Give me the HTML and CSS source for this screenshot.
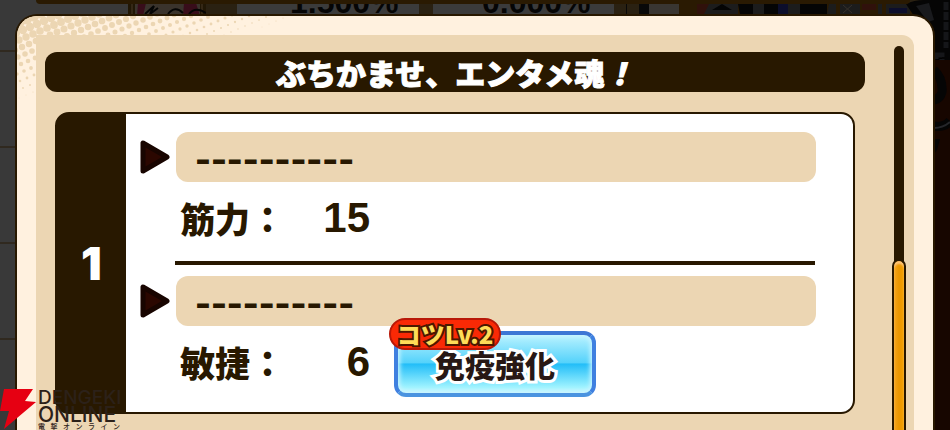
FILE: index.html
```html
<!DOCTYPE html>
<html lang="ja">
<head>
<meta charset="utf-8">
<title>ぶちかませ、エンタメ魂！</title>
<link rel="stylesheet" href="styles.css">
</head>
<body>
<div class="backdrop">
  <svg class="backdrop-art" width="950" height="430" aria-hidden="true">
    <rect width="950" height="430" fill="#393939"/>
    <path d="M0 51H20M0 147H20M0 243H20M0 339H20" stroke="#30291f" stroke-width="2"/>
    <rect x="128" y="0" width="78" height="16" fill="#211705"/>
    <path d="M132 3V16M202 3V16" stroke="#4b3a28" stroke-width="1"/>
    <path d="M135 3H200V16H135Z" fill="#3a332c"/>
    <path d="M138 3H146L143 16H137ZM184 3H196L200 16H183Z" fill="#380d1a"/>
    <path d="M145 14L154 6L150 14L158 8M168 14Q175 5 183 13M189 14Q195 6 206 13" fill="none" stroke="#050505" stroke-width="2"/>
    <path d="M206 0H950V16H206Z" fill="#2a2112"/>
    <path d="M237 3H419V16H237ZM433 3H614V16H433Z" fill="#3b3b3b"/>
    <path d="M626 3H627V14H626ZM639 3H649V14H639Z" fill="#090909"/>
    <path d="M649 3H679V16H649Z" fill="#393632"/>
    <path d="M679 3H950V430H679Z" fill="#2a1a02"/>
    <path d="M697 4H709V14H697ZM862 4H876V10H862Z" fill="#30110b"/>
    <path d="M709 4H738V14H704ZM753 4H764V14H753ZM788 4H802V14H788ZM829 4H836V14H827ZM840 4H860V14H840ZM878 4H882V14H878ZM886 4H910V14H886Z" fill="#1c1c1c"/>
    <path d="M738 4H753V14H740ZM764 4H778V14H764ZM800 4H827V14H800ZM712 10L722 4L732 10Z" fill="#050505"/>
    <path d="M778 4H788V14H778ZM889 8H907V13H889Z" fill="#0c0e2c"/>
    <path d="M843 5L852 13M852 5L843 13" stroke="#35302a"/>
    <path d="M906 4Q914 0 924 0H950V430H930V40Z" fill="#050505"/>
    <path d="M916 6L929 3L934 20L928 22Z" fill="#191a1d"/>
    <path d="M946 2V48M936 55H942V66H936Z" stroke="#151619" stroke-width="5" stroke-dasharray="8 2"/>
    <path d="M934 60H950V430H934Z" fill="#170600"/>
    <path d="M934 70Q943 78 942 92Q940 99 934 100M934 126Q944 128 950 121" fill="none" stroke="#050505" stroke-width="9"/>
    <path d="M934 128Q943 128 950 122" fill="none" stroke="#25262a" stroke-width="2"/>
    <path d="M934 139H940L937 150L934 154Z" fill="#050505"/>
  </svg>
  <span class="rate rate-first">1.500%</span>
  <span class="rate rate-second">0.000%</span>
  <div class="backdrop-edge"></div>
</div>

<main class="dialog">
  <svg class="halftone" id="halftone" aria-hidden="true"></svg>
  <div class="panel">
    <div class="list">
      <h1 class="title">ぶちかませ、エンタメ魂<em>！</em></h1>
      <section class="card">
        <div class="card-number">1</div>
        <div class="card-body">
          <div class="choice">
            <svg class="arrow" viewBox="0 0 30 34" aria-hidden="true"><path d="M3 3V31L27 17Z" fill="#2b0700" stroke="#180500" stroke-width="5" stroke-linejoin="round"/></svg>
            <div class="field">----------</div>
            <div class="stat"><span class="stat-name">筋力：</span><span class="stat-value">15</span></div>
          </div>
          <hr class="divider">
          <div class="choice">
            <svg class="arrow" viewBox="0 0 30 34" aria-hidden="true"><path d="M3 3V31L27 17Z" fill="#2b0700" stroke="#180500" stroke-width="5" stroke-linejoin="round"/></svg>
            <div class="field">----------</div>
            <div class="stat"><span class="stat-name">敏捷：</span><span class="stat-value">6</span>
              <button class="skill" type="button"><span class="skill-level">コツLv.2</span><span class="skill-name">免疫強化</span></button>
            </div>
          </div>
        </div>
      </section>
    </div>
    <div class="scrollbar"><div class="thumb"></div></div>
  </div>
</main>

<div class="watermark">
  <svg class="bolt" viewBox="0 0 36 40" aria-hidden="true"><path d="M4 0H33L25 12L36 13L4 40L9 22H0Z" fill="#e60012"/></svg>
  <div class="brand">
    <span class="brand-line">DENGEKI</span>
    <span class="brand-line brand-wide">ONLINE</span>
    <span class="brand-kana">電撃オンライン</span>
  </div>
</div>
<script src="halftone.js"></script>
</body>
</html>
```
FILE: styles.css
```css
* { box-sizing: border-box; }

body {
  margin: 0;
  height: 100vh;
  overflow: hidden;
  position: relative;
  display: flex;
  background: #393939;
  color: #281800;
  font-family: "Noto Sans CJK JP", "Noto Sans", sans-serif;
  font-weight: 900;
}

.backdrop { position: absolute; inset: 0; overflow: hidden; }
.backdrop-art { display: block; }

.backdrop-edge {
  position: absolute;
  top: 0;
  left: 36px;
  right: 40px;
  height: 4px;
  border-radius: 0 0 10px 10px;
  background: #2a1a02;
}

.rate {
  position: absolute;
  top: -14px;
  color: #050505;
  font: bold 32px/32px "Liberation Sans", sans-serif;
}
.rate-first { left: 290px; }
.rate-second { left: 482px; }

.dialog {
  position: relative;
  flex: 1;
  display: flex;
  margin: 14px 15px 0;
  padding: 19px 19px 0;
  border: 2px solid #281800;
  border-bottom: 0;
  border-radius: 22px 22px 0 0;
  background: #fff1df;
  overflow: hidden;
}

.halftone {
  position: absolute;
  top: 0;
  left: 0;
  width: 340px;
  height: 110px;
  fill: #ecd6b3;
}

.panel {
  position: relative;
  flex: 1;
  display: flex;
  gap: 27px;
  padding: 0 8px 0 9px;
  border-radius: 0 12px 0 0;
  background: #ecd6b3;
}

.list { flex: 1; padding-top: 17px; }

.title {
  margin: 0;
  border-radius: 12px;
  background: #281800;
  color: #fff;
  text-align: center;
  font-size: 30px;
  font-weight: 900;
  line-height: 40px;
  -webkit-text-stroke: 1px #fff;
}

.card {
  display: flex;
  margin: 20px 10px 0;
  border: 2px solid #281800;
  border-radius: 14px;
  background: #281800;
}

.card-number {
  display: flex;
  align-items: center;
  justify-content: center;
  width: 69px;
  color: #fff;
  font-family: Inter, sans-serif;
  font-size: 46px;
}

.card-body {
  flex: 1;
  padding: 18px 37px 0 14px;
  border-radius: 0 12px 12px 0;
  background: #fff;
}

.choice {
  display: grid;
  grid-template-columns: 30px 1fr;
  column-gap: 6px;
  align-items: center;
}

.arrow { width: 30px; height: 34px; }

.field {
  height: 50px;
  padding-left: 19px;
  border-radius: 12px;
  background: #ecd6b3;
  font-size: 43px;
  font-weight: 700;
  line-height: 46px;
}

.stat {
  grid-column: 2;
  display: flex;
  align-items: center;
  height: 79px;
  padding: 0 0 8px 4px;
}

.stat-name { width: 110px; font-size: 35px; line-height: 40px; }

.stat-value {
  width: 80px;
  text-align: right;
  font: bold 42px/40px "Liberation Sans", sans-serif;
}

.divider {
  height: 4px;
  margin: 0 1px 11px 35px;
  border: 0;
  background: #281800;
}

.choice:last-child .stat { height: 86px; padding-bottom: 15px; }

.skill {
  position: relative;
  width: 202px;
  height: 66px;
  margin: 5px 0 0 24px;
  padding: 0;
  border: 4px solid #4388df;
  border-color: #3d77d5 #3f80e0 #4b94e0;
  border-radius: 12px;
  background: linear-gradient(#b9f2ff, #54d2fb 48%, #22bdf8 50%, #9ff3ff 90%, #c9f8ff);
  box-shadow: inset 0 0 4px 2px #c8f4ff;
  color: #281815;
  font: 900 30px/56px "Noto Sans CJK JP", sans-serif;
}

.skill-name {
  -webkit-text-stroke: 6px #fff;
  paint-order: stroke fill;
}

.skill-level {
  position: absolute;
  top: -17px;
  left: -9px;
  width: 112px;
  height: 32px;
  border: 2px solid #b81808;
  border-radius: 16px;
  background: #fa2905;
  color: #ffdc58;
  font-size: 24px;
  line-height: 27px;
  -webkit-text-stroke: 4px #4c1800;
  paint-order: stroke fill;
}

.scrollbar {
  display: flex;
  flex-direction: column;
  width: 14px;
  margin-top: 11px;
  padding-top: 213px;
  position: relative;
}

.scrollbar::before {
  content: "";
  position: absolute;
  inset: 0 2px;
  border-radius: 5px 5px 0 0;
  background: #281800;
}

.thumb {
  position: relative;
  flex: 1;
  border: 2px solid #281800;
  border-bottom: 0;
  border-radius: 7px 7px 0 0;
  background: linear-gradient(90deg, #f6a51c, #eb9600 50%, #f3a000);
  box-shadow: inset 0 3px 2px #ffc477;
}

.watermark {
  position: absolute;
  left: 0;
  bottom: 0;
  display: flex;
  gap: 2px;
}

.bolt { width: 36px; height: 40px; }

.brand {
  display: flex;
  flex-direction: column;
  width: 82px;
  color: #2c2119;
}

.brand-line { font: 500 19px/17px Inter, sans-serif; }
.brand-wide { font-size: 21px; }
.brand-kana { font-size: 7px; font-weight: 500; line-height: 7px; text-align-last: justify; }
```
FILE: halftone.js
```js
// Dots shrink with distance from the dialog's top-left corner.
const svg = document.getElementById("halftone");
const ns = "http://www.w3.org/2000/svg";
const ux = 7, uy = 3;
for (let i = -20; i < 60; i++) {
  for (let j = -40; j < 40; j++) {
    const x = i * ux + j * uy;
    const y = j * ux - i * uy;
    const r = 5 * (1 - Math.max(x, 0) / 310 - Math.max(y, 0) / 90);
    if (x < -6 || y < -6 || r < 0.4) continue;
    const dot = document.createElementNS(ns, "circle");
    dot.setAttribute("cx", x);
    dot.setAttribute("cy", y);
    dot.setAttribute("r", r);
    svg.appendChild(dot);
  }
}
```
